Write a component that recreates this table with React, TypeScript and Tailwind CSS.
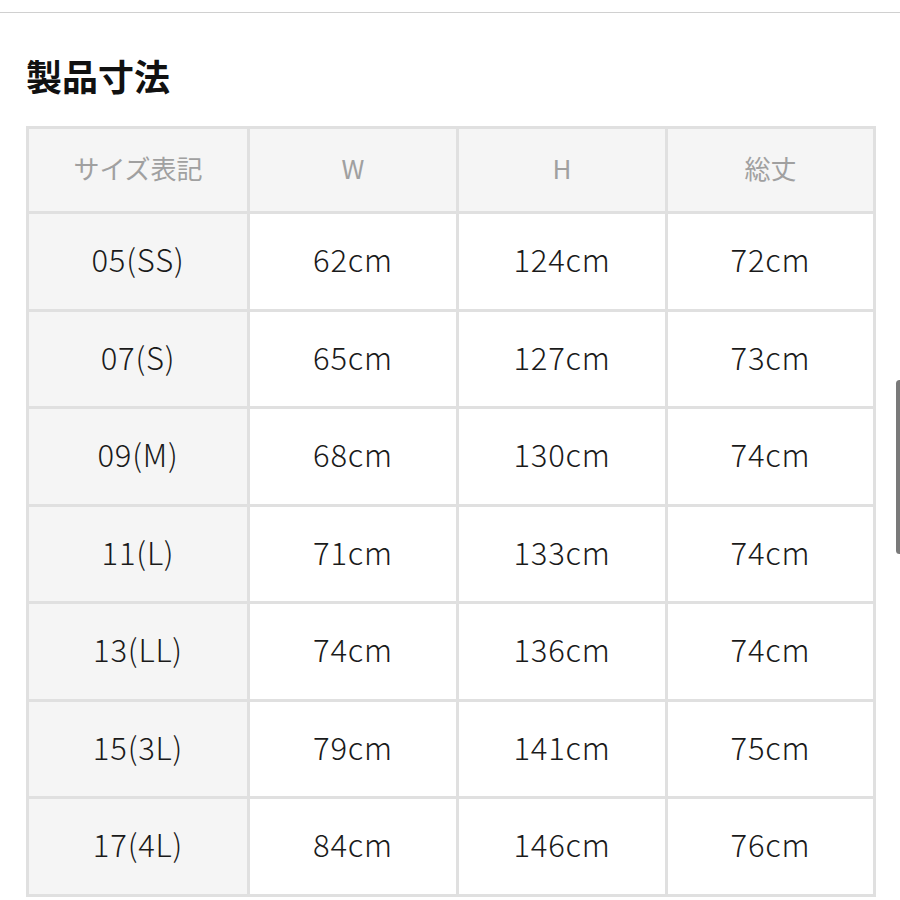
import React from 'react';

const rows = [
  ['05(SS)', '62cm', '124cm', '72cm'],
  ['07(S)', '65cm', '127cm', '73cm'],
  ['09(M)', '68cm', '130cm', '74cm'],
  ['11(L)', '71cm', '133cm', '74cm'],
  ['13(LL)', '74cm', '136cm', '74cm'],
  ['15(3L)', '79cm', '141cm', '75cm'],
  ['17(4L)', '84cm', '146cm', '76cm'],
];

const headers = ['サイズ表記', 'W', 'H', '総丈'];

const App = () => {
  return (
    <div
      className="relative w-[900px] h-[900px] bg-white overflow-hidden"
      style={{ fontFamily: '"Noto Sans CJK JP", "Noto Sans", sans-serif' }}
    >
      <div className="h-[12px]" />
      <div className="h-px bg-[#d0d0d0]" />
      <div className="pl-[26px] pt-[40px]">
        <h2 className="text-[36px] leading-[44px] font-bold text-[#111]">製品寸法</h2>
      </div>
      <div className="pl-[26px] pt-[29px]">
        <table className="w-[847px] border-collapse table-fixed">
          <colgroup>
            <col className="w-[221px]" />
            <col className="w-[209px]" />
            <col className="w-[209px]" />
            <col className="w-[208px]" />
          </colgroup>
          <thead>
            <tr className="h-[85px]">
              {headers.map((h) => (
                <th
                  key={h}
                  className="border-[3px] border-[#e0e0e0] bg-[#f5f5f5] text-[26px] leading-[30px] pb-[4px] font-normal text-[#a0a0a0] text-center"
                >
                  {h}
                </th>
              ))}
            </tr>
          </thead>
          <tbody>
            {rows.map((r) => (
              <tr key={r[0]} className="h-[97.5px]">
                {r.map((c, i) => (
                  <td
                    key={i}
                    className={
                      'border-[3px] border-[#e0e0e0] text-center text-[31px] leading-[36px] pb-[4px] tracking-[0.8px] font-light text-[#1a1a1a] ' +
                      (i === 0 ? 'bg-[#f5f5f5]' : 'bg-white')
                    }
                  >
                    {c}
                  </td>
                ))}
              </tr>
            ))}
          </tbody>
        </table>
      </div>
      <div className="absolute left-[896px] top-[380px] w-[7px] h-[174px] rounded-full bg-[#7a7a7a]" />
    </div>
  );
};

export default App;
